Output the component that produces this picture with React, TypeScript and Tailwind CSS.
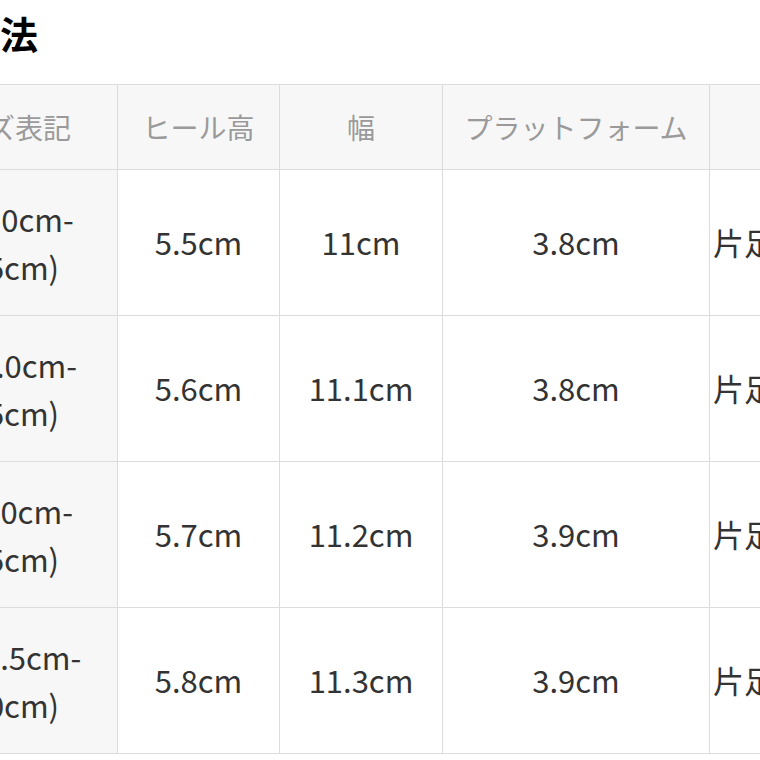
import React from "react";

const rows = [
  { size: ["S(22.0cm-", "22.5cm)"], heel: "5.5cm", width: "11cm", plat: "3.8cm", weight: "片足約280g" },
  { size: ["M(23.0cm-", "23.5cm)"], heel: "5.6cm", width: "11.1cm", plat: "3.8cm", weight: "片足約290g" },
  { size: ["L(24.0cm-", "24.5cm)"], heel: "5.7cm", width: "11.2cm", plat: "3.9cm", weight: "片足約300g" },
  { size: ["LL(24.5cm-", "25.0cm)"], heel: "5.8cm", width: "11.3cm", plat: "3.9cm", weight: "片足約310g" },
];

const font = { fontFamily: '"Noto Sans CJK JP", "Noto Sans", sans-serif' };

export default function App() {
  return (
    <div className="w-[760px] h-[760px] overflow-hidden bg-white" style={font}>
      <h2 className="ml-[-38px] pt-[14px] text-[38px] leading-none font-bold text-black whitespace-nowrap">
        寸法
      </h2>
      <table className="mt-[32px] ml-[-105px] border-collapse table-fixed w-[1014px]">
        <colgroup>
          <col className="w-[222px]" />
          <col className="w-[162px]" />
          <col className="w-[163px]" />
          <col className="w-[267px]" />
          <col className="w-[200px]" />
        </colgroup>
        <thead>
          <tr className="h-[85px] bg-[#f7f7f7]">
            {["サイズ表記", "ヒール高", "幅", "プラットフォーム", "重量"].map((h, i) => (
              <th
                key={i}
                className={
                  "border border-[#dcdcdc] text-[28px] font-normal text-[#9a9a9a] whitespace-nowrap " +
                  (i === 4 ? "text-left pl-[120px]" : i === 0 ? "text-center pr-[10px]" : "text-center")
                }
              >
                {h}
              </th>
            ))}
          </tr>
        </thead>
        <tbody>
          {rows.map((r, i) => (
            <tr key={i} className="h-[146px]">
              <td className="border border-[#dcdcdc] bg-[#f7f7f7] text-center pr-[10px] text-[31px] leading-[48px] text-[#333333] whitespace-nowrap">
                {r.size[0]}
                <br />
                {r.size[1]}
              </td>
              <td className="border border-[#dcdcdc] text-center text-[31px] text-[#333333]">{r.heel}</td>
              <td className="border border-[#dcdcdc] text-center text-[31px] text-[#333333]">{r.width}</td>
              <td className="border border-[#dcdcdc] text-center text-[31px] text-[#333333]">{r.plat}</td>
              <td className="border border-[#dcdcdc] text-left pl-[3px] text-[31px] text-[#333333] whitespace-nowrap">
                {r.weight}
              </td>
            </tr>
          ))}
        </tbody>
      </table>
    </div>
  );
}
